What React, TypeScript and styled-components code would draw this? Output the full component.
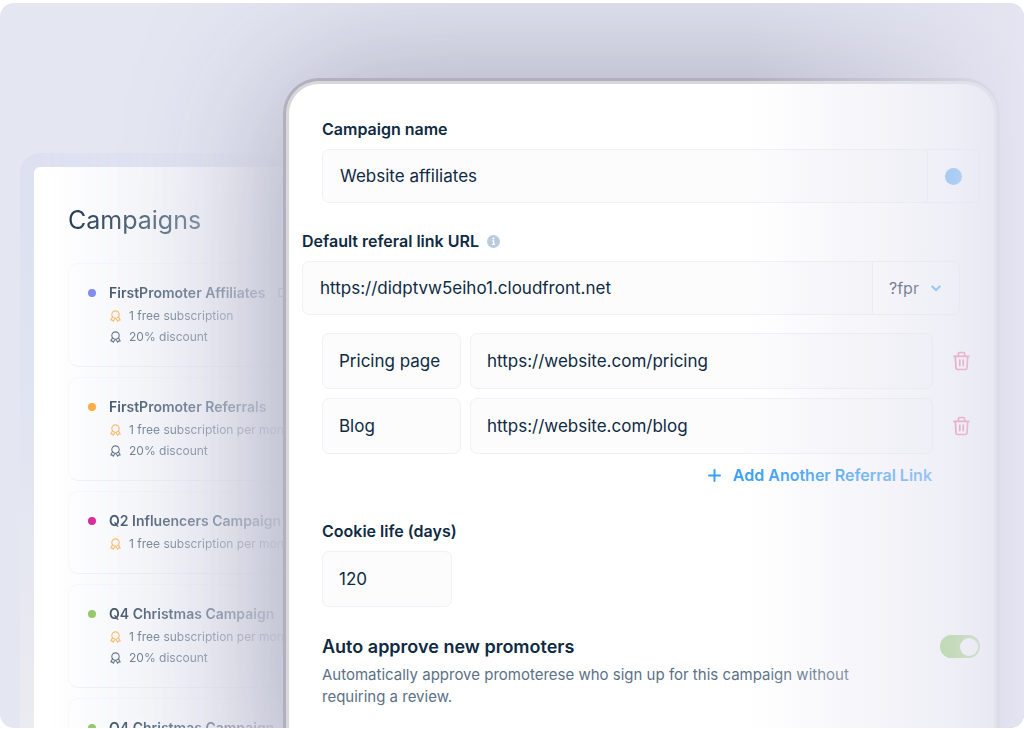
import React from "react";
import styled, { createGlobalStyle } from "styled-components";

const GlobalStyle = createGlobalStyle`
  *, *::before, *::after { box-sizing: border-box; }
  body { margin: 0; background: #fff; font-family: Inter, "Liberation Sans", sans-serif; color: #0f2a43; }
  h1, h2, h3, p, ul { margin: 0; padding: 0; }
  ul { list-style: none; }
  button, input, select { font: inherit; color: inherit; margin: 0; }
  button { background: none; border: 0; padding: 0; cursor: pointer; }
`;

const Stage = styled.main`
  position: relative;
  display: grid;
  grid-template-columns: 263px minmax(0, 1fr);
  height: calc(100vh - 4px);
  margin-top: 3px;
  padding: 0 24px 0 20px;
  border-radius: 14px;
  overflow: hidden;
  background: #e4e6f2;

  &::after {
    content: "";
    position: absolute;
    inset: 0;
    pointer-events: none;
    background: linear-gradient(
      to right,
      rgba(228, 228, 241, 0) 73%,
      rgba(228, 228, 241, 0.62) 93%,
      rgba(228, 228, 241, 0.88) 98%,
      #e4e4f2 100%
    );
  }
`;

const Sidebar = styled.aside`
  margin-top: 150px;
  padding: 14px 0 0 14px;
  border-radius: 20px 0 0 0;
  overflow: hidden;
  background: linear-gradient(#dde0f1, #e0e3f1 40%, #ebecf1);
  mask-image: linear-gradient(to right, #000 8%, rgba(0, 0, 0, 0.45) 68%, rgba(0, 0, 0, 0.08) 98%);
`;

const SidebarPanel = styled.div`
  min-height: 100%;
  padding: 34px 0 0 34px;
  border-radius: 6px 0 0 0;
  background: #fff;
`;

const SidebarTitle = styled.h1`
  font-size: 25px;
  font-weight: 400;
  line-height: 38px;
`;

const CampaignList = styled.ul`
  display: grid;
  gap: 10px;
  margin-top: 24px;
`;

const CampaignCard = styled.li`
  display: grid;
  grid-template-columns: 8px auto;
  column-gap: 13px;
  width: 420px;
  padding: 17px 19px 19px;
  border: 1px solid #f9f9fb;
  border-bottom-color: #f1f1f5;
  border-radius: 10px;
`;

const StatusDot = styled.span<{ $color: string }>`
  width: 8px;
  height: 8px;
  margin-top: 8px;
  border-radius: 50%;
  background: ${(p) => p.$color};
`;

const CampaignName = styled.h2`
  display: flex;
  gap: 12px;
  font-size: 14px;
  font-weight: 600;
  line-height: 24px;
  white-space: nowrap;
`;

const DefaultTag = styled.span`
  font-size: 12px;
  font-weight: 400;
`;

const Reward = styled.p`
  display: flex;
  align-items: center;
  gap: 8px;
  padding-left: 1px;
  font-size: 12px;
  line-height: 21px;
  color: #3c546b;
  white-space: nowrap;
`;

const Editor = styled.section`
  position: relative;
  margin: 75px 0 -80px;
  padding: 33px 14px 0 13px;
  border: 3px solid #b0b0be;
  border-bottom: 0;
  border-radius: 36px 36px 0 0;
  background: #fff;
  background-clip: padding-box;
  box-shadow: inset 0 0 0 3px #d8d8da, 0 0 150px 0 rgba(50, 50, 80, 0.35);
`;

const EditorForm = styled.form`
  padding: 3px;
`;

const Field = styled.div<{ $wide?: boolean; $top?: number }>`
  display: grid;
  gap: 8px;
  margin: ${(p) => p.$top ?? 0}px ${(p) => (p.$wide ? 20 : 0)}px 0 ${(p) => (p.$wide ? 0 : 20)}px;
`;

const LabelRow = styled.div`
  display: flex;
  align-items: center;
  gap: 8px;
  height: 24px;
`;

const Label = styled.label`
  font-size: 16px;
  font-weight: 600;
  line-height: 24px;
`;

const Box = styled.div`
  display: flex;
  height: 54px;
  border: 1px solid #f0f0f6;
  border-radius: 7px;
  background: #fcfcfd;
  overflow: hidden;
`;

const BoxInput = styled.input`
  flex: 1;
  min-width: 0;
  padding: 0 17px;
  border: 0;
  background: none;
  font-size: 17px;
  outline: 0;
`;

const ColorButton = styled.button`
  display: grid;
  place-items: center;
  width: 52px;
  border-left: 1px solid #f0f0f6;
  background: #fff;

  &::before {
    content: "";
    width: 17px;
    height: 17px;
    border-radius: 50%;
    background: #4ba6f5;
  }
`;

const ParamPicker = styled.span`
  display: flex;
  align-items: center;
  gap: 10px;
  width: 87px;
  padding-left: 16px;
  border-left: 1px solid #f0f0f6;
  background: #fff;
`;

const ParamSelect = styled.select`
  appearance: none;
  width: 32px;
  padding: 0;
  border: 0;
  background: none;
  font-size: 16px;
  outline: 0;
`;

const LinkRows = styled.div`
  display: grid;
  gap: 9px;
  margin: 18px 0 0 20px;
`;

const LinkRow = styled.div`
  display: grid;
  grid-template-columns: 139px minmax(0, 1fr) 28px;
  column-gap: 9px;
  align-items: center;
  padding-right: 10px;
`;

const LinkInput = styled.input`
  width: 100%;
  height: 56px;
  padding: 0 16px;
  border: 1px solid #f0f0f6;
  border-radius: 7px;
  background: #fcfcfd;
  font-size: 17px;
  outline: 0;
`;

const DeleteButton = styled.button`
  display: grid;
  justify-content: end;
`;

const AddLink = styled.button`
  display: flex;
  align-items: center;
  justify-self: end;
  gap: 12px;
  margin-right: 48px;
  color: #3b9ff3;
  font-size: 16px;
  font-weight: 600;
  line-height: 24px;
`;

const CookieInput = styled(LinkInput)`
  width: 130px;
`;

const ApproveRow = styled.div`
  display: flex;
  justify-content: space-between;
  align-items: flex-start;
  margin: 28px 0 0 20px;
`;

const ApproveTitle = styled.label`
  display: block;
  font-size: 18px;
  font-weight: 600;
  line-height: 24px;
`;

const ApproveHint = styled.p`
  max-width: 560px;
  margin-top: 5px;
  color: #5b7187;
  font-size: 15px;
  line-height: 22px;
`;

const Switch = styled.input`
  appearance: none;
  display: flex;
  align-items: center;
  justify-content: flex-end;
  width: 40px;
  height: 23px;
  padding-right: 2px;
  border-radius: 12px;
  background: #8fcb62;
  cursor: pointer;

  &:not(:checked) {
    justify-content: flex-start;
    padding: 0 0 0 2px;
    background: #c5ccd6;
  }

  &::before {
    content: "";
    width: 18px;
    height: 18px;
    border-radius: 50%;
    background: #fff;
  }
`;

const RewardIcon = ({ color }: { color: string }) => (
  <svg width="11" height="12" viewBox="0 0 11 12" fill="none" stroke={color} strokeWidth="1.1" strokeLinecap="round" strokeLinejoin="round" aria-hidden="true">
    <path d="M2.9 7.2A3.7 3.7 0 1 1 8.1 7.2" />
    <path d="M2.5 6.8.8 10l1.7.1.8 1.2 1.5-2.5h1.4l1.5 2.5.8-1.2 1.7-.1-1.7-3.2" />
    <path d="M2.9 7.4c1.6 1.1 3.6 1.1 5.2 0" />
  </svg>
);

const InfoIcon = () => (
  <svg width="13" height="13" viewBox="0 0 13 13" aria-hidden="true">
    <circle cx="6.5" cy="6.5" r="6.5" fill="#bccbdb" />
    <circle cx="6.4" cy="3.6" r="1" fill="#fff" />
    <path d="M5.2 5.8h1.5v3.4M5.1 9.3h3" stroke="#fff" strokeWidth="1.3" fill="none" />
  </svg>
);

const TrashIcon = () => (
  <svg width="17" height="20" viewBox="0 0 17 20" fill="none" stroke="#f2527f" strokeWidth="1.7" strokeLinecap="round" strokeLinejoin="round" aria-hidden="true">
    <path d="M1 5.3h15M5.4 5V2.7c0-.7.5-1.2 1.2-1.2h3.8c.7 0 1.2.5 1.2 1.2V5" />
    <path d="m2.3 5.5.7 11.4c.1 1 .7 1.6 1.7 1.6h7.6c1 0 1.6-.6 1.7-1.6l.7-11.4" />
    <path d="M6.8 9v5.6M10.2 9v5.6" />
  </svg>
);

const PlusIcon = () => (
  <svg width="13" height="13" viewBox="0 0 13 13" fill="none" stroke="currentColor" strokeWidth="2" strokeLinecap="round" aria-hidden="true">
    <path d="M6.5 1v11M1 6.5h11" />
  </svg>
);

const ChevronIcon = () => (
  <svg width="10" height="7" viewBox="0 0 10 7" fill="none" stroke="#4ba6f5" strokeWidth="2.2" strokeLinecap="round" strokeLinejoin="round" aria-hidden="true">
    <path d="m1.3 1.5 3.7 3.6 3.7-3.6" />
  </svg>
);

const campaigns = [
  { name: "FirstPromoter Affiliates", color: "#6f76f0", free: "1 free subscription", discount: true, isDefault: true },
  { name: "FirstPromoter Referrals", color: "#ffa021", free: "1 free subscription per month", discount: true },
  { name: "Q2 Influencers Campaign", color: "#d6048b", free: "1 free subscription per month", discount: false },
  { name: "Q4 Christmas Campaign", color: "#84c34c", free: "1 free subscription per month", discount: true },
  { name: "Q4 Christmas Campaign", color: "#84c34c", free: "1 free subscription per month", discount: true },
];

const links = [
  { name: "Pricing page", url: "https://website.com/pricing" },
  { name: "Blog", url: "https://website.com/blog" },
];

export default function App() {
  return (
    <>
      <GlobalStyle />
      <Stage>
        <Sidebar>
          <SidebarPanel>
            <SidebarTitle>Campaigns</SidebarTitle>
            <CampaignList>
              {campaigns.map((c, i) => (
                <CampaignCard key={i}>
                  <StatusDot $color={c.color} />
                  <div>
                    <CampaignName>
                      {c.name}
                      {c.isDefault && <DefaultTag>Default</DefaultTag>}
                    </CampaignName>
                    <Reward>
                      <RewardIcon color="#ffae42" />
                      {c.free}
                    </Reward>
                    {c.discount && (
                      <Reward>
                        <RewardIcon color="#3c546b" />
                        20% discount
                      </Reward>
                    )}
                  </div>
                </CampaignCard>
              ))}
            </CampaignList>
          </SidebarPanel>
        </Sidebar>
        <Editor>
          <EditorForm onSubmit={(e) => e.preventDefault()}>
            <Field>
              <Label htmlFor="name">Campaign name</Label>
              <Box>
                <BoxInput id="name" defaultValue="Website affiliates" />
                <ColorButton type="button" aria-label="Campaign color" />
              </Box>
            </Field>
            <Field $wide $top={26}>
              <LabelRow>
                <Label htmlFor="url">Default referal link URL</Label>
                <InfoIcon />
              </LabelRow>
              <Box>
                <BoxInput id="url" defaultValue="https://didptvw5eiho1.cloudfront.net" />
                <ParamPicker>
                  <ParamSelect aria-label="Referral parameter" defaultValue="?fpr">
                    <option>?fpr</option>
                  </ParamSelect>
                  <ChevronIcon />
                </ParamPicker>
              </Box>
            </Field>
            <LinkRows>
              {links.map((l) => (
                <LinkRow key={l.name}>
                  <LinkInput aria-label="Link name" defaultValue={l.name} />
                  <LinkInput aria-label="Link URL" defaultValue={l.url} />
                  <DeleteButton type="button" aria-label={`Delete ${l.name}`}>
                    <TrashIcon />
                  </DeleteButton>
                </LinkRow>
              ))}
              <AddLink type="button">
                <PlusIcon />
                Add Another Referral Link
              </AddLink>
            </LinkRows>
            <Field $top={32}>
              <Label htmlFor="cookie">Cookie life (days)</Label>
              <CookieInput id="cookie" defaultValue="120" />
            </Field>
            <ApproveRow>
              <div>
                <ApproveTitle htmlFor="approve">Auto approve new promoters</ApproveTitle>
                <ApproveHint>
                  Automatically approve promoterese who sign up for this campaign without requiring a review.
                </ApproveHint>
              </div>
              <Switch id="approve" type="checkbox" role="switch" defaultChecked />
            </ApproveRow>
          </EditorForm>
        </Editor>
      </Stage>
    </>
  );
}
